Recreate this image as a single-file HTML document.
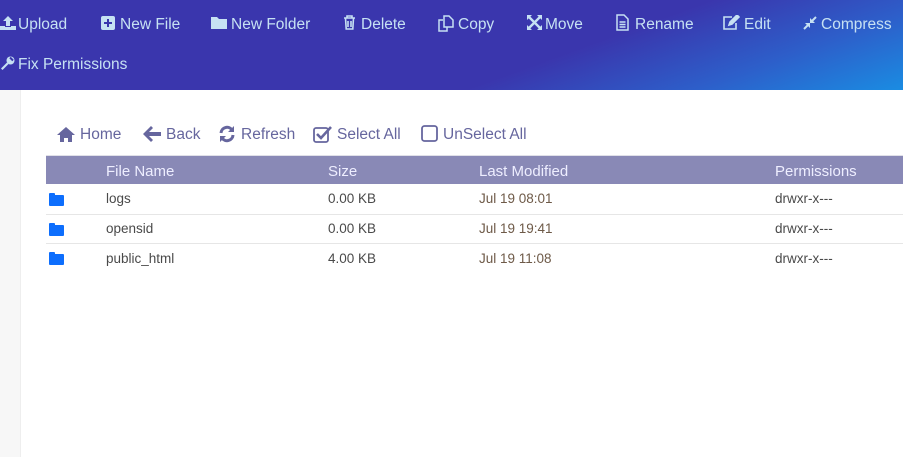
<!DOCTYPE html>
<html><head><meta charset="utf-8"><style>
*{margin:0;padding:0;box-sizing:border-box}
body{width:903px;height:457px;overflow:hidden;background:#fff;font-family:"Liberation Sans",sans-serif;position:relative}
.hdr{position:absolute;left:0;top:0;width:903px;height:90px;background:linear-gradient(160deg,#3a36ad 0%,#3a36ad 62%,#2d5fca 82%,#1a8ce2 100%)}
.t{position:absolute;color:#c6e1f3;font-size:15.5px;line-height:20px;white-space:nowrap}
.ic{position:absolute}
.side{position:absolute;left:0;top:90px;width:21px;height:367px;background:#f7f7f7;border-right:1px solid #eee}
.n{position:absolute;color:#66669e;font-size:15.5px;line-height:20px;white-space:nowrap}
.th{position:absolute;left:46px;top:155px;width:857px;height:29px;background:#8989b6;border-top:1px solid #e0e0e8}
.h{position:absolute;color:#eef;font-size:15px;top:163px;white-space:nowrap}
.r{position:absolute;color:#4a4a4a;font-size:13.5px;white-space:nowrap}
.d{color:#6e5a48}
.line{position:absolute;left:46px;width:857px;height:1px;background:#e6e6e6}
.f{position:absolute;left:49px;width:15px;height:11px;background:#0d6efd;border-radius:1px}
.f:before{content:"";position:absolute;left:0;top:-2px;width:6px;height:3px;background:#0d6efd;border-radius:1px 1px 0 0}
</style></head><body>
<div class="hdr"></div>
<svg class="ic" style="left:0;top:15px" width="16" height="16" viewBox="0 0 16 16" fill="#c6e1f3"><path d="M8 1l5 5H10v5H6V6H3z"/><path d="M0 11h5v1h6v-1h5v4H0z"/></svg>
<div class="t" style="left:18px;top:15px">Upload</div>
<svg class="ic" style="left:101px;top:16px" width="14" height="14" viewBox="0 0 14 14"><rect width="14" height="14" rx="2" fill="#c6e1f3"/><path d="M6 3h2v3h3v2H8v3H6V8H3V6h3z" fill="#3a36ad"/></svg>
<div class="t" style="left:120px;top:15px">New File</div>
<svg class="ic" style="left:211px;top:16px" width="16" height="13" viewBox="0 0 16 13" fill="#c6e1f3"><path d="M0 1h6l2 2h8v10H0z"/></svg>
<div class="t" style="left:231px;top:15px">New Folder</div>
<svg class="ic" style="left:343px;top:15px" width="13" height="15" viewBox="0 0 13 15" fill="none" stroke="#c6e1f3" stroke-width="1.6"><path d="M1 3h11M4 3V1h5v2M2.5 3l.7 11h6.6l.7-11M5 6v6M8 6v6"/></svg>
<div class="t" style="left:361px;top:15px">Delete</div>
<svg class="ic" style="left:438px;top:15px" width="17" height="17" viewBox="0 0 17 17" fill="none" stroke="#c6e1f3" stroke-width="1.5"><path d="M6 1h5l4 4v7H6z"/><path d="M5 5H1v11h8v-4"/></svg>
<div class="t" style="left:458px;top:15px">Copy</div>
<svg class="ic" style="left:527px;top:15px" width="15" height="15" viewBox="0 0 15 15" fill="#c6e1f3"><path d="M0 0h5L0 5zM15 0v5L10 0zM0 15v-5l5 5zM15 15h-5l5-5z"/><path d="M2 2l11 11M13 2L2 13" stroke="#c6e1f3" stroke-width="2.4"/></svg>
<div class="t" style="left:545px;top:15px">Move</div>
<svg class="ic" style="left:616px;top:14px" width="13" height="17" viewBox="0 0 13 17" fill="none" stroke="#c6e1f3" stroke-width="1.5"><path d="M1 1h7l4 4v11H1zM3.5 8h6M3.5 10.5h6M3.5 13h6"/></svg>
<div class="t" style="left:635px;top:15px">Rename</div>
<svg class="ic" style="left:723px;top:15px" width="17" height="15" viewBox="0 0 17 15" fill="none" stroke="#c6e1f3" stroke-width="1.6"><path d="M9 2H1v12h12V8"/><path d="M6 10l1-3 7-7 2 2-7 7z" fill="#c6e1f3"/></svg>
<div class="t" style="left:744px;top:15px">Edit</div>
<svg class="ic" style="left:803px;top:16px" width="14" height="14" viewBox="0 0 14 14" fill="#c6e1f3"><path d="M1 13l5-5M13 1L8 6" stroke="#c6e1f3" stroke-width="2"/><path d="M2 7h5v5zM12 7H7V2z"/></svg>
<div class="t" style="left:821px;top:15px">Compress</div>
<svg class="ic" style="left:0;top:56px" width="15" height="15" viewBox="0 0 15 15" fill="#c6e1f3"><path d="M1 12.5l6-6 1.5 1.5-6 6z"/><circle cx="10.5" cy="4.5" r="4"/><path d="M10 1.5l3 3" stroke="#3a36ad" stroke-width="2"/></svg>
<div class="t" style="left:18px;top:55px">Fix Permissions</div>
<div class="side"></div>
<svg class="ic" style="left:56px;top:126px" width="20" height="16" viewBox="0 0 20 16" fill="#66669e"><path d="M10 1l9 8h-3v7h-4v-4H8v4H4V9H1z"/></svg>
<div class="n" style="left:80px;top:125px">Home</div>
<svg class="ic" style="left:143px;top:126px" width="18" height="16" viewBox="0 0 18 16" fill="#66669e"><path d="M8 0l2 2-4 4h12v4H6l4 4-2 2L0 8z"/></svg>
<div class="n" style="left:166px;top:125px">Back</div>
<svg class="ic" style="left:218px;top:125px" width="18" height="18" viewBox="0 0 18 18" fill="none" stroke="#66669e" stroke-width="3"><path d="M3 8a6 6 0 0 1 11-3M15 10a6 6 0 0 1-11 3"/><path d="M16 1v6h-6zM2 17v-6h6z" fill="#66669e" stroke="none"/></svg>
<div class="n" style="left:241px;top:125px">Refresh</div>
<svg class="ic" style="left:313px;top:125px" width="19" height="18" viewBox="0 0 19 18" fill="none" stroke="#66669e" stroke-width="1.8"><rect x="1" y="3" width="14" height="14" rx="2"/><path d="M4 9l4 4 10-11" stroke-width="2.6"/></svg>
<div class="n" style="left:337px;top:125px">Select All</div>
<svg class="ic" style="left:421px;top:125px" width="17" height="17" viewBox="0 0 17 17" fill="none" stroke="#66669e" stroke-width="1.8"><rect x="1" y="1" width="15" height="15" rx="2.5"/></svg>
<div class="n" style="left:443px;top:125px">UnSelect All</div>
<div class="th"></div>
<div class="h" style="left:106px">File Name</div>
<div class="h" style="left:328px">Size</div>
<div class="h" style="left:479px">Last Modified</div>
<div class="h" style="left:775px">Permissions</div>
<div class="line" style="top:214px"></div>
<div class="line" style="top:243px"></div>
<div class="f" style="top:195px"></div>
<div class="f" style="top:225px"></div>
<div class="f" style="top:254px"></div>
<div class="r" style="left:106px;top:191px">logs</div>
<div class="r" style="left:328px;top:191px">0.00 KB</div>
<div class="r d" style="left:479px;top:191px">Jul 19 08:01</div>
<div class="r" style="left:775px;top:191px">drwxr-x---</div>
<div class="r" style="left:106px;top:221px">opensid</div>
<div class="r" style="left:328px;top:221px">0.00 KB</div>
<div class="r d" style="left:479px;top:221px">Jul 19 19:41</div>
<div class="r" style="left:775px;top:221px">drwxr-x---</div>
<div class="r" style="left:106px;top:251px">public_html</div>
<div class="r" style="left:328px;top:251px">4.00 KB</div>
<div class="r d" style="left:479px;top:251px">Jul 19 11:08</div>
<div class="r" style="left:775px;top:251px">drwxr-x---</div>
</body></html>
